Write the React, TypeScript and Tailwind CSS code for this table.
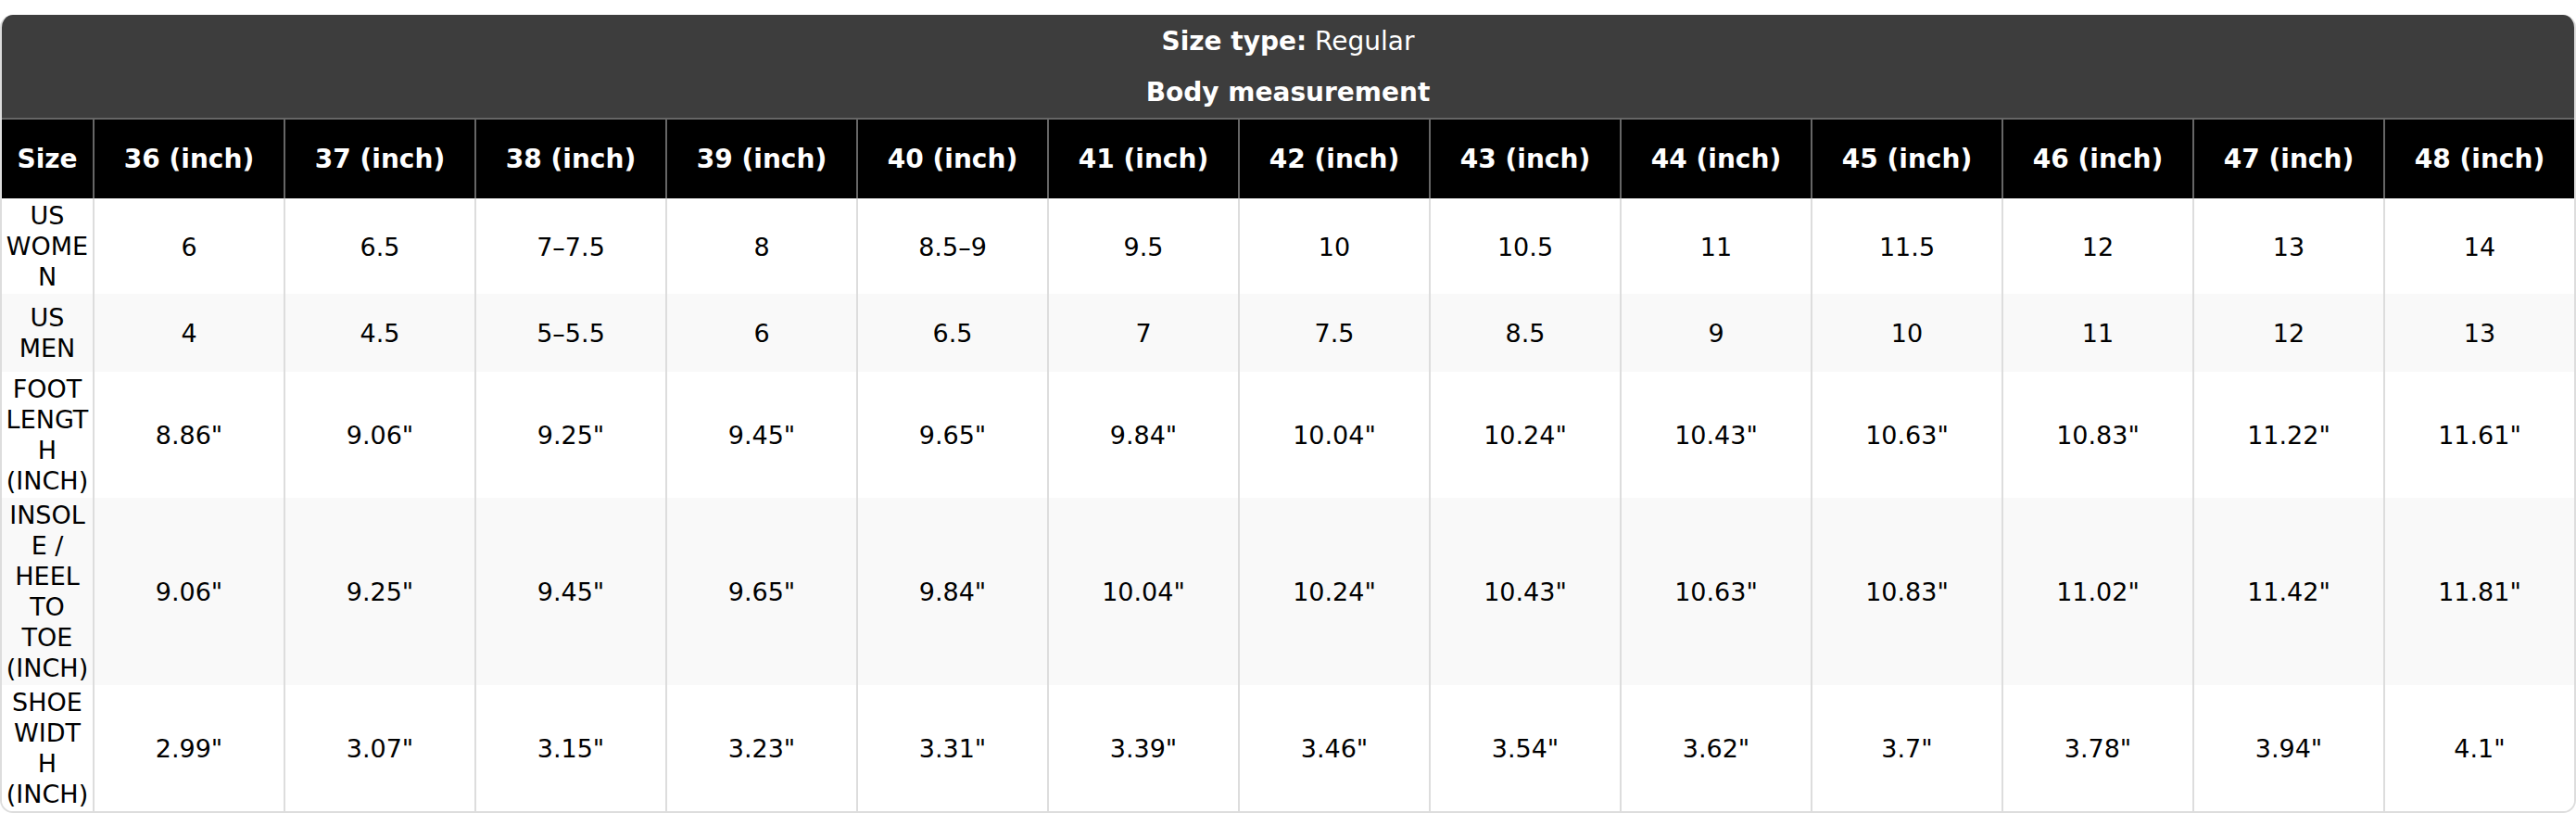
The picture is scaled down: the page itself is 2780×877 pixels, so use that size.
const sizes = [36, 37, 38, 39, 40, 41, 42, 43, 44, 45, 46, 47, 48];

const rows: { label: string; values: string[] }[] = [
  { label: 'US WOMEN', values: ['6', '6.5', '7–7.5', '8', '8.5–9', '9.5', '10', '10.5', '11', '11.5', '12', '13', '14'] },
  { label: 'US MEN', values: ['4', '4.5', '5–5.5', '6', '6.5', '7', '7.5', '8.5', '9', '10', '11', '12', '13'] },
  {
    label: 'FOOT LENGTH (INCH)',
    values: ['8.86"', '9.06"', '9.25"', '9.45"', '9.65"', '9.84"', '10.04"', '10.24"', '10.43"', '10.63"', '10.83"', '11.22"', '11.61"'],
  },
  {
    label: 'INSOLE / HEEL TO TOE (INCH)',
    values: ['9.06"', '9.25"', '9.45"', '9.65"', '9.84"', '10.04"', '10.24"', '10.43"', '10.63"', '10.83"', '11.02"', '11.42"', '11.81"'],
  },
  {
    label: 'SHOE WIDTH (INCH)',
    values: ['2.99"', '3.07"', '3.15"', '3.23"', '3.31"', '3.39"', '3.46"', '3.54"', '3.62"', '3.7"', '3.78"', '3.94"', '4.1"'],
  },
];

export default function App() {
  return (
    <div className="bg-white pt-[16px] font-['DejaVu_Sans',sans-serif]">
      <div className="overflow-hidden rounded-[14px] border-x-2 border-b-2 border-[#dddddd]">
        <table className="w-full table-fixed border-separate border-spacing-0 text-center">
          <colgroup>
            <col className="w-[98px]" />
            {sizes.map((s) => (
              <col key={s} />
            ))}
          </colgroup>
          <thead>
            {/* 表題 */}
            <tr className="bg-[#3d3d3d] text-white">
              <th colSpan={14} className="pt-[12px] pb-[11px] text-[28px] leading-[33px] font-normal">
                <span className="font-bold">Size type:</span> Regular
              </th>
            </tr>
            <tr className="bg-[#3d3d3d] text-white">
              <th colSpan={14} className="py-[11px] text-[28px] leading-[33px] font-bold">
                Body measurement
              </th>
            </tr>
            {/* サイズ見出し */}
            <tr className="bg-black text-white">
              <th className="border-t-2 border-[#666666] py-[26px] text-[28px] leading-[33px] font-bold">Size</th>
              {sizes.map((s) => (
                <th
                  key={s}
                  className="border-t-2 border-l-2 border-[#666666] py-[26px] text-[28px] leading-[33px] font-bold"
                >
                  {s} (inch)
                </th>
              ))}
            </tr>
          </thead>
          <tbody className="text-[27px] leading-[33px] text-black">
            {rows.map((row, i) => (
              <tr key={row.label} className={i % 2 === 1 ? 'bg-[#f9f9f9]' : 'bg-white'}>
                <td className="px-[3.5px] py-[2px] [overflow-wrap:anywhere]">{row.label}</td>
                {row.values.map((v, j) => (
                  <td key={j} className="border-l-2 border-[#dddddd] pt-[26px] pb-[25px]">
                    {v}
                  </td>
                ))}
              </tr>
            ))}
          </tbody>
        </table>
      </div>
    </div>
  );
}
